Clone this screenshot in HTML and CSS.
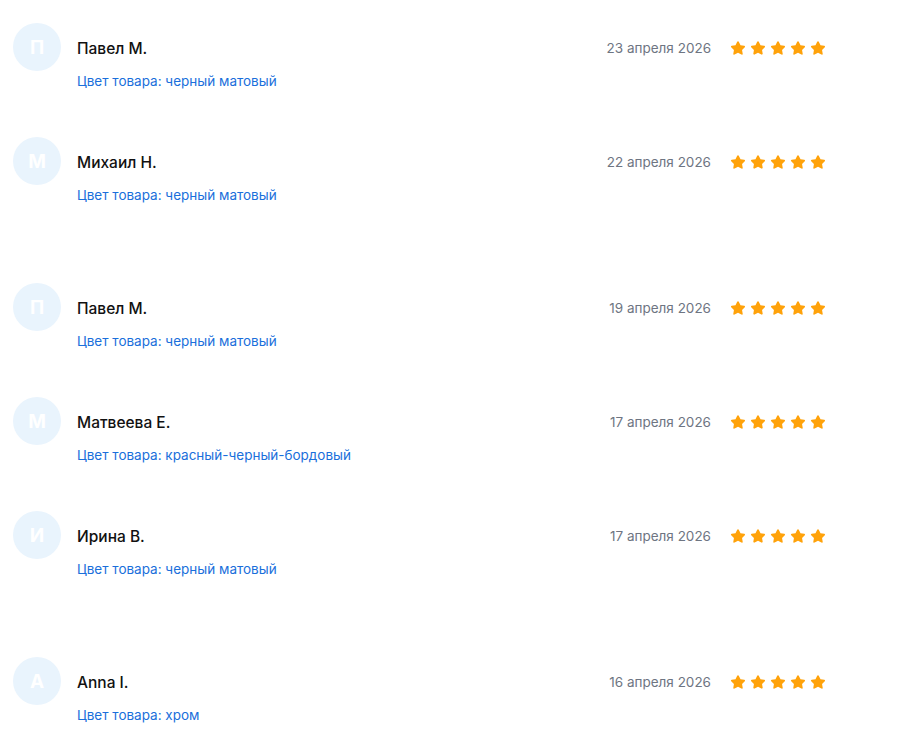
FILE: index.html
```html
<!DOCTYPE html>
<html lang="ru">
<head>
<meta charset="utf-8">
<link rel="stylesheet" href="styles.css">
</head>
<body>
<svg width="0" height="0" class="defs">
  <defs>
    <path id="star" d="M8 1.2c.35 0 .65.2.8.5l1.7 3.5 3.8.55c.7.1 1 .95.5 1.45l-2.75 2.7.65 3.8c.12.7-.62 1.22-1.25.9L8 12.8l-3.45 1.8c-.63.32-1.37-.2-1.25-.9l.65-3.8L1.2 7.2c-.5-.5-.2-1.35.5-1.45l3.8-.55 1.7-3.5c.15-.3.45-.5.8-.5z"/>
  </defs>
</svg>
<div class="reviews">
  <div class="review">
    <div class="avatar">П</div>
    <div class="content">
      <div class="head">
        <div class="name">Павел М.</div>
        <div class="meta"><span class="date">23 апреля 2026</span><span class="stars"><svg viewBox="0 0 16 16"><use href="#star"/></svg><svg viewBox="0 0 16 16"><use href="#star"/></svg><svg viewBox="0 0 16 16"><use href="#star"/></svg><svg viewBox="0 0 16 16"><use href="#star"/></svg><svg viewBox="0 0 16 16"><use href="#star"/></svg></span></div>
      </div>
      <div class="variant">Цвет товара: черный матовый</div>
    </div>
  </div>
  <div class="review">
    <div class="avatar">М</div>
    <div class="content">
      <div class="head">
        <div class="name">Михаил Н.</div>
        <div class="meta"><span class="date">22 апреля 2026</span><span class="stars"><svg viewBox="0 0 16 16"><use href="#star"/></svg><svg viewBox="0 0 16 16"><use href="#star"/></svg><svg viewBox="0 0 16 16"><use href="#star"/></svg><svg viewBox="0 0 16 16"><use href="#star"/></svg><svg viewBox="0 0 16 16"><use href="#star"/></svg></span></div>
      </div>
      <div class="variant">Цвет товара: черный матовый</div>
      <div class="body"></div>
    </div>
  </div>
  <div class="review">
    <div class="avatar">П</div>
    <div class="content">
      <div class="head">
        <div class="name">Павел М.</div>
        <div class="meta"><span class="date">19 апреля 2026</span><span class="stars"><svg viewBox="0 0 16 16"><use href="#star"/></svg><svg viewBox="0 0 16 16"><use href="#star"/></svg><svg viewBox="0 0 16 16"><use href="#star"/></svg><svg viewBox="0 0 16 16"><use href="#star"/></svg><svg viewBox="0 0 16 16"><use href="#star"/></svg></span></div>
      </div>
      <div class="variant">Цвет товара: черный матовый</div>
    </div>
  </div>
  <div class="review">
    <div class="avatar">М</div>
    <div class="content">
      <div class="head">
        <div class="name">Матвеева Е.</div>
        <div class="meta"><span class="date">17 апреля 2026</span><span class="stars"><svg viewBox="0 0 16 16"><use href="#star"/></svg><svg viewBox="0 0 16 16"><use href="#star"/></svg><svg viewBox="0 0 16 16"><use href="#star"/></svg><svg viewBox="0 0 16 16"><use href="#star"/></svg><svg viewBox="0 0 16 16"><use href="#star"/></svg></span></div>
      </div>
      <div class="variant">Цвет товара: красный-черный-бордовый</div>
    </div>
  </div>
  <div class="review">
    <div class="avatar">И</div>
    <div class="content">
      <div class="head">
        <div class="name">Ирина В.</div>
        <div class="meta"><span class="date">17 апреля 2026</span><span class="stars"><svg viewBox="0 0 16 16"><use href="#star"/></svg><svg viewBox="0 0 16 16"><use href="#star"/></svg><svg viewBox="0 0 16 16"><use href="#star"/></svg><svg viewBox="0 0 16 16"><use href="#star"/></svg><svg viewBox="0 0 16 16"><use href="#star"/></svg></span></div>
      </div>
      <div class="variant">Цвет товара: черный матовый</div>
      <div class="body"></div>
    </div>
  </div>
  <div class="review">
    <div class="avatar">A</div>
    <div class="content">
      <div class="head">
        <div class="name">Anna I.</div>
        <div class="meta"><span class="date">16 апреля 2026</span><span class="stars"><svg viewBox="0 0 16 16"><use href="#star"/></svg><svg viewBox="0 0 16 16"><use href="#star"/></svg><svg viewBox="0 0 16 16"><use href="#star"/></svg><svg viewBox="0 0 16 16"><use href="#star"/></svg><svg viewBox="0 0 16 16"><use href="#star"/></svg></span></div>
      </div>
      <div class="variant">Цвет товара: хром</div>
    </div>
  </div>
</div>
</body>
</html>
```
FILE: styles.css
```css
* { box-sizing: border-box; }
html, body { margin: 0; padding: 0; background: #fff; }
body {
  font-family: Inter, "Noto Sans", "Liberation Sans", sans-serif;
  color: #111;
  overflow: hidden;
}
.defs { position: absolute; }
.reviews {
  width: 826px;
  padding: 23px 0 0 13px;
  display: flex;
  flex-direction: column;
  gap: 48px;
}
.review {
  display: flex;
  gap: 16px;
  align-items: flex-start;
}
.avatar {
  flex: 0 0 48px;
  width: 48px;
  height: 48px;
  border-radius: 50%;
  background: #e9f4fd;
  color: #fff;
  font-size: 19px;
  font-weight: 700;
  display: flex;
  align-items: center;
  justify-content: center;
}
.content {
  flex: 1;
  padding-top: 13px;
}
.head {
  height: 24px;
  display: flex;
  align-items: center;
  justify-content: space-between;
}
.name {
  font-size: 15.5px;
  font-weight: 500;
  color: #111;
}
.meta {
  display: flex;
  align-items: center;
  gap: 19px;
}
.date {
  font-size: 13.5px;
  color: #6e7582;
}
.stars {
  display: flex;
  gap: 4px;
}
.stars svg {
  width: 16px;
  height: 16px;
  fill: #ffa20a;
  display: block;
}
.variant {
  margin-top: 13px;
  font-size: 13.5px;
  line-height: 16px;
  color: #1a6fdb;
}
.body {
  height: 32px;
}
```
